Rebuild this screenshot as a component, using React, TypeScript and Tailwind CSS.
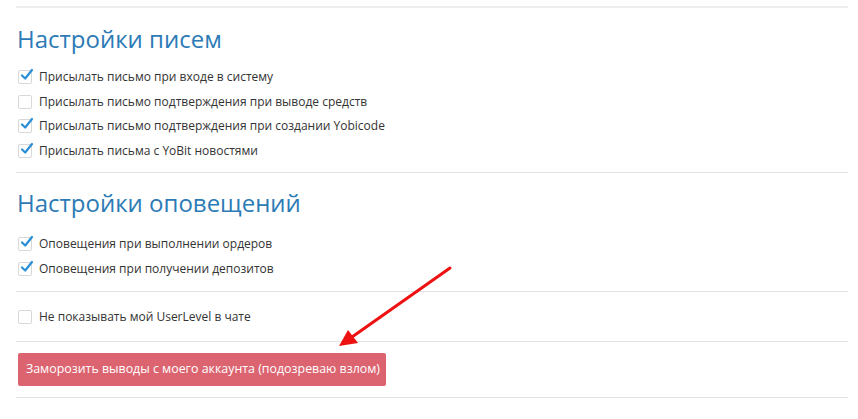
import React from "react";

function Check({ checked }: { checked: boolean }) {
  return (
    <span className="relative inline-block w-[14px] h-[14px] shrink-0 border border-[#d8d8d8] rounded-[2px] bg-white">
      {checked && (
        <svg className="absolute left-[1px] -top-[3px]" width="14" height="14" viewBox="0 0 14 14">
          <path d="M2 7.5 L5.2 10.5 L12 2" fill="none" stroke="#2a8fd6" strokeWidth="2.2" strokeLinecap="round" strokeLinejoin="round" />
        </svg>
      )}
    </span>
  );
}

function Row({ checked, label }: { checked: boolean; label: string }) {
  return (
    <div className="flex items-center h-[24.5px] pl-[2px] gap-[7px]">
      <Check checked={checked} />
      <span className="text-[12px] text-[#333]">{label}</span>
    </div>
  );
}

export default function App() {
  return (
    <div className="relative w-[858px] h-[419px] bg-white overflow-hidden" style={{ fontFamily: "'Open Sans', 'Noto Sans', sans-serif" }}>
      <div className="pl-[16px] pr-[10px] pt-[6px]">
        <div className="border-t-2 border-[#eeeeee]" />
        <h2 className="text-[24px] leading-[30px] text-[#2c7bb6] font-normal mt-[16px] mb-[11px] pl-[1px]">Настройки писем</h2>
        <div>
          <Row checked label="Присылать письмо при входе в систему" />
          <Row checked={false} label="Присылать письмо подтверждения при выводе средств" />
          <Row checked label="Присылать письмо подтверждения при создании Yobicode" />
          <Row checked label="Присылать письма с YoBit новостями" />
        </div>
        <div className="border-t border-[#e3e3e3] mt-[9px]" />
        <h2 className="text-[24px] leading-[30px] text-[#2c7bb6] font-normal mt-[15px] mb-[14px] pl-[1px]">Настройки оповещений</h2>
        <div>
          <Row checked label="Оповещения при выполнении ордеров" />
          <Row checked label="Оповещения при получении депозитов" />
        </div>
        <div className="border-t border-[#e3e3e3] mt-[10px] mb-[13px]" />
        <Row checked={false} label="Не показывать мой UserLevel в чате" />
        <div className="border-t border-[#e3e3e3] mt-[11px]" />
        <div className="pt-[11px] pb-[11px] pl-[2px]">
          <button className="h-[33px] pl-[8px] pr-[6px] bg-[#dc6470] rounded-[2px] text-white text-[12.4px]">Заморозить выводы с моего аккаунта (подозреваю взлом)</button>
        </div>
        <div className="border-t border-[#e3e3e3]" />
      </div>
      <svg className="absolute left-0 top-0" width="858" height="419" viewBox="0 0 858 419">
        <line x1="450" y1="268" x2="352" y2="337" stroke="#ee1111" strokeWidth="3" strokeLinecap="round" />
        <polygon points="339,346 348,330 358,343" fill="#ee1111" />
      </svg>
    </div>
  );
}
